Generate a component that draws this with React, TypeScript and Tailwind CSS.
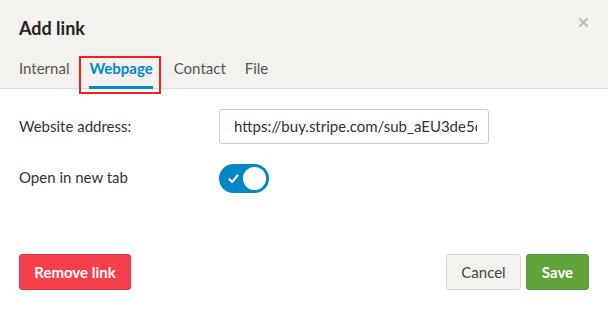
import React from "react";

export default function App() {
  const font = { fontFamily: '"Lato", "Open Sans", "Liberation Sans", sans-serif' };
  return (
    <div className="w-[608px] h-[310px] bg-white text-[#333] overflow-hidden" style={font}>
      <div className="bg-[#f4f2ee] border-b border-[#dedbd6] h-[89px] relative flex flex-col">
        <div className="pl-[19px] pt-[16px] text-[18px] font-bold text-[#222] leading-[24px]">Add link</div>
        <svg className="absolute left-[579px] top-[18px]" width="9" height="9" viewBox="0 0 9 9">
          <path d="M1 1 L8 8 M8 1 L1 8" stroke="#bdbab5" strokeWidth="2" strokeLinecap="square" />
        </svg>
        <div className="flex items-start pl-[19px] mt-[19px] text-[15px] leading-[18px]">
          <div className="text-[#555]">Internal</div>
          <div className="relative ml-[20px] flex flex-col">
            <div className="text-[#0089c9] font-bold">Webpage</div>
            <div className="mt-[9px] h-[3px] bg-[#0089c9]" />
            <div className="absolute left-[-10px] right-[-8px] top-[-3px] bottom-[-5px] border-2 border-[#ee2222]" />
          </div>
          <div className="text-[#555] ml-[21px]">Contact</div>
          <div className="text-[#555] ml-[19px]">File</div>
        </div>
      </div>
      <div className="px-[19px]">
        <div className="flex items-center mt-[20px] h-[35px]">
          <div className="w-[200px] text-[15px] text-[#333]">Website address:</div>
          <div className="w-[270px] h-[35px] border border-[#cfccc8] rounded-[3px] flex items-center pl-[14px] pr-[11px]">
            <div className="overflow-hidden whitespace-nowrap text-[15px] text-[#333] w-full">
              https://buy.stripe.com/sub_aEU3de5c
            </div>
          </div>
        </div>
        <div className="flex items-center mt-[20px] h-[29px]">
          <div className="w-[200px] text-[15px] text-[#333] -mt-[3px]">Open in new tab</div>
          <div className="w-[50px] h-[29px] rounded-full bg-[#0088c6] relative">
            <svg className="absolute left-[9px] top-[10px]" width="11" height="10" viewBox="0 0 11 10">
              <path d="M1.5 5.2 L4.2 8 L9.5 1.5" fill="none" stroke="white" strokeWidth="2" strokeLinecap="round" strokeLinejoin="round" />
            </svg>
            <div className="absolute right-[3px] top-[3px] w-[23px] h-[23px] rounded-full bg-white" />
          </div>
        </div>
        <div className="flex items-center justify-between mt-[61px] w-[570px]">
          <button className="h-[36px] w-[112px] rounded-[3px] bg-[#f53f4b] border border-[#e0353f] text-white font-bold text-[15px]">
            Remove link
          </button>
          <div className="flex gap-[5px]">
            <button className="h-[36px] w-[75px] rounded-[3px] bg-[#f4f2ee] border border-[#d8d5d0] text-[#444] text-[15px]">
              Cancel
            </button>
            <button className="h-[36px] w-[63px] rounded-[3px] bg-[#62a23a] border border-[#5a9634] text-white font-bold text-[15px]">
              Save
            </button>
          </div>
        </div>
      </div>
    </div>
  );
}
